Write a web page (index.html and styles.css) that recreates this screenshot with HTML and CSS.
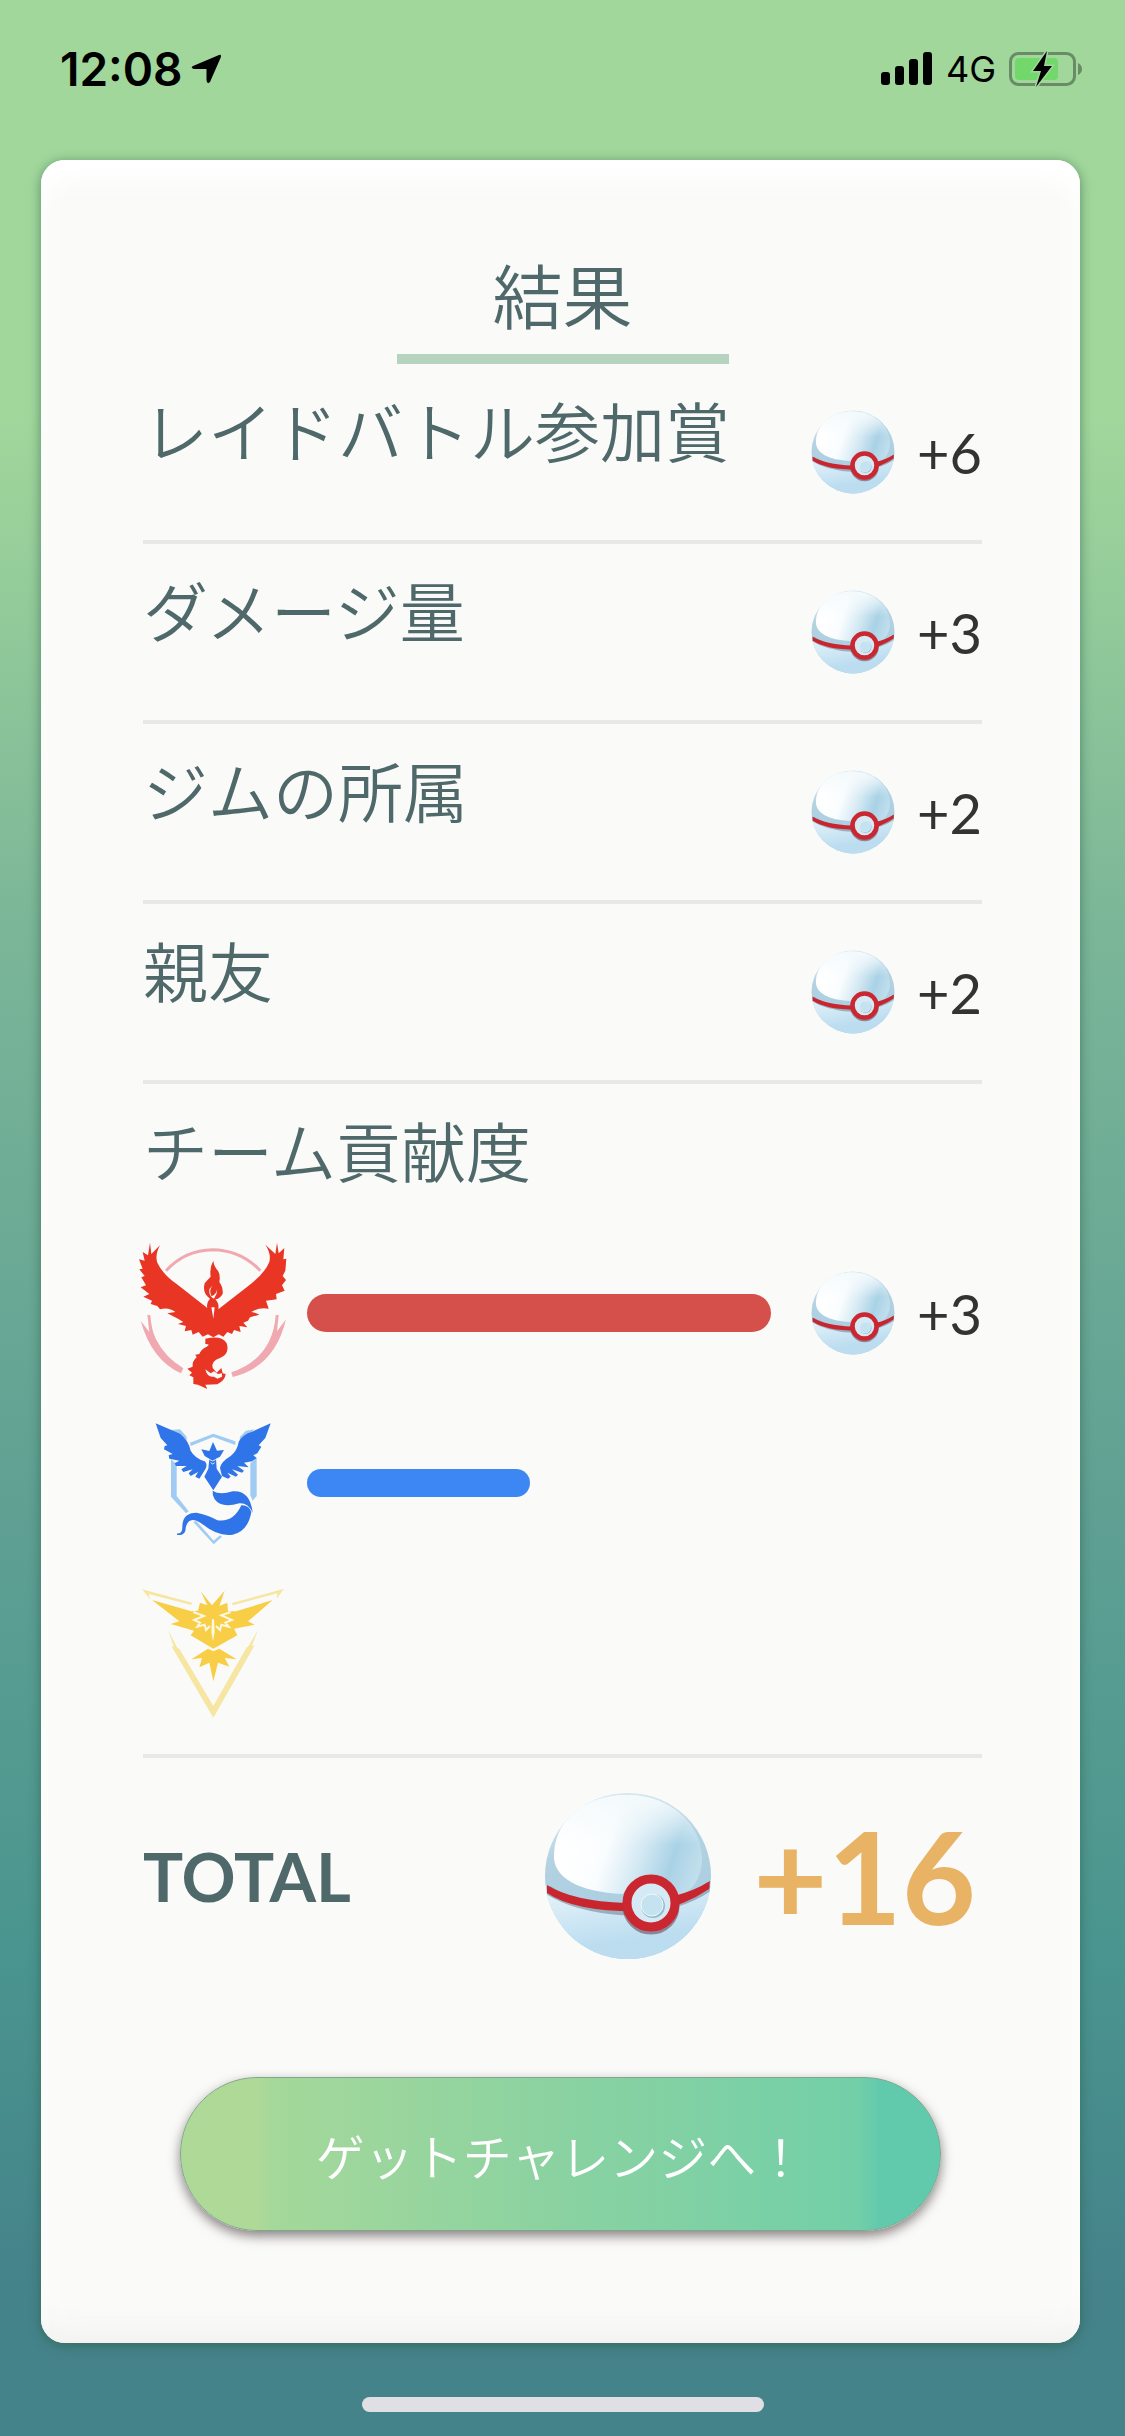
FILE: index.html
```
<!DOCTYPE html>
<html lang="ja">
<head>
    <meta charset="UTF-8">
    <meta name="viewport" content="width=device-width, initial-scale=1">
    <title>結果</title>
    <link rel="stylesheet" href="styles.css">
</head>
<body>
    <!-- Shared drawings -->
    <svg class="defs" width="0" height="0" aria-hidden="true">
        <defs>
            <linearGradient id="shell" x1="0.1" y1="0.4" x2="1" y2="0.6">
                <stop offset="0" stop-color="#ffffff"/>
                <stop offset="0.3" stop-color="#fafdfe"/>
                <stop offset="0.55" stop-color="#d6eaf4"/>
                <stop offset="0.8" stop-color="#a9d2e6"/>
                <stop offset="1" stop-color="#c0deec"/>
            </linearGradient>
            <linearGradient id="shine" x1="0" y1="0" x2="0" y2="1">
                <stop offset="0" stop-color="#f4fafc"/>
                <stop offset="0.5" stop-color="#f4fafc" stop-opacity="0"/>
            </linearGradient>
            <linearGradient id="rim" x1="0" y1="0" x2="0.2" y2="1">
                <stop offset="0" stop-color="#e3eff5"/>
                <stop offset="0.4" stop-color="#b3d2e2"/>
                <stop offset="1" stop-color="#a5cce0"/>
            </linearGradient>
            <linearGradient id="base" x1="0" y1="0" x2="0.3" y2="0.8">
                <stop offset="0" stop-color="#e8f5fb"/>
                <stop offset="1" stop-color="#bcddf0"/>
            </linearGradient>
            <clipPath id="ballClip"><circle cx="84" cy="84" r="83"/></clipPath>
        </defs>
        <symbol id="ball" viewBox="0 0 168 168">
            <circle cx="84" cy="84" r="83" fill="url(#rim)"/>
            <g clip-path="url(#ballClip)">
                <path d="M0 97Q30 118 84 118Q130 118 168 95V168H0Z" fill="url(#base)"/>
                <path d="M10 62C12 24 44 3 84 3C128 3 158 34 158 66C158 86 148 100 136 103L106 84L78 102C36 100 8 86 10 62Z" fill="url(#shell)"/>
                <path d="M10 62C12 24 44 3 84 3C128 3 158 34 158 66C158 86 148 100 136 103L106 84L78 102C36 100 8 86 10 62Z" fill="url(#shine)"/>
                <path d="M4 98Q32 116 82 119Q136 116 166 94" fill="none" stroke="#5f7486" stroke-width="9" opacity="0.5"/>
                <path d="M3 93Q28 109 82 111Q136 108 166 89L165 97Q140 114 110 119Q34 122 3 101Z" fill="#c9252f"/>
            </g>
            <circle cx="107" cy="114" r="25" fill="none" stroke="#6b4a5a" stroke-width="7" opacity="0.6"/>
            <circle cx="107" cy="111" r="24" fill="#d5eaf5" stroke="#cb2731" stroke-width="9"/>
            <circle cx="109" cy="114" r="12" fill="#94bdd1"/>
            <circle cx="108" cy="113" r="11" fill="#c5e2f1" stroke="#f0fafd" stroke-width="1"/>
        </symbol>
    </svg>

    <header class="status-bar">
        <div class="status-group">
            <span class="time">12:08</span>
            <svg class="location" viewBox="0 0 30 30" aria-hidden="true">
                <path d="M28 1Q31 0 29.500 4L19 28Q16 31 15.500 26V15H3Q-1 14 2 12Z"/>
            </svg>
        </div>
        <div class="status-group">
            <svg class="signal" viewBox="0 0 52 34" aria-hidden="true">
                <rect x="0" y="20" width="9" height="13" rx="3"/>
                <rect x="14" y="14" width="9" height="19" rx="3"/>
                <rect x="28" y="7" width="9" height="26" rx="3"/>
                <rect x="42" y="0" width="9" height="33" rx="3"/>
            </svg>
            <span class="network">4G</span>
            <svg class="battery" viewBox="0 0 74 36" aria-hidden="true">
                <rect x="1.500" y="2.500" width="64" height="31" rx="8" fill="none" stroke="#688c65" stroke-width="3"/>
                <rect x="6" y="7" width="43" height="22" rx="4" fill="#72d86b"/>
                <path d="M69 12Q73 14 73 18Q73 22 69 24Z" fill="#688c65"/>
                <path d="M38 0L24 20H32L27 36L43 15H35Z" fill="#000" stroke="#a1d79b" stroke-width="3" paint-order="stroke"/>
            </svg>
        </div>
    </header>

    <main class="card">
        <h1>結果</h1>

        <ul class="rewards">
            <li class="reward">
                <span class="label">レイドバトル参加賞</span>
                <span class="bonus"><svg class="ball" aria-hidden="true"><use href="#ball"/></svg>+6</span>
            </li>
            <li class="reward">
                <span class="label">ダメージ量</span>
                <span class="bonus"><svg class="ball" aria-hidden="true"><use href="#ball"/></svg>+3</span>
            </li>
            <li class="reward">
                <span class="label">ジムの所属</span>
                <span class="bonus"><svg class="ball" aria-hidden="true"><use href="#ball"/></svg>+2</span>
            </li>
            <li class="reward">
                <span class="label">親友</span>
                <span class="bonus"><svg class="ball" aria-hidden="true"><use href="#ball"/></svg>+2</span>
            </li>
        </ul>

        <section class="teams">
            <h2 class="label">チーム貢献度</h2>
            <div class="team valor">
                <svg class="emblem" viewBox="0 -6 510 510" aria-hidden="true">
                    <path d="M108 122Q165 60 248 59Q332 60 391 122" fill="none" stroke="#f0a9b0" stroke-width="9"/>
                    <g fill="#f0a9b0">
                        <path d="M32 272L58 306L52 254L61 256Q64 300 78 328Q105 382 160 415L153 430Q65 390 32 272Z"/>
                        <path d="M468 268L441 304L446 254L437 256Q434 300 418 332Q385 400 304 427L308 441Q435 410 468 268Z"/>
                    </g>
                    <g fill="#e83524">
                        <path d="M60 38L64 72L90 46Q74 75 82 98Q100 135 140 162L232 234Q228 218 240 206Q216 190 224 160Q232 150 242 140Q238 112 250 92Q252 110 264 122Q272 135 268 156Q280 172 278 192Q268 208 256 208Q268 220 265 238L350 172Q405 130 418 96Q424 70 406 44L436 72L441 38L446 70L463 54L460 88L469 86L466 122L458 138L468 150L456 166L464 182L438 192L440 208L408 212L416 236Q385 232 364 246Q378 248 388 254L360 262L354 272L340 278L352 292L328 288L332 306L312 300L306 312L292 306L280 320L266 313L250 322L234 313L218 320L206 306L188 314L184 300L164 304L168 288L144 282L160 276L144 266L112 250L136 246Q116 230 90 238L82 228L62 222L66 212L40 200L58 192L32 172L48 166L34 142L44 138L28 118L38 116L27 88L44 92L38 66L54 76Z"/>
                        <path d="M226 326Q276 314 290 340Q300 372 270 384Q242 394 248 414L260 428L274 414L278 430L287 432Q286 450 262 463L226 464L232 477L204 464L190 462L190 442L178 436L186 428L172 416L188 410Q186 394 200 382L196 374L208 372Q212 358 230 350Q244 342 226 342Z"/>
                    </g>
                    <path d="M248 166Q236 182 244 198Q256 198 262 178Q262 192 252 206Q236 200 238 178ZM244 232L250 266L254 232Z" fill="#fafaf8"/>
                    <path d="M226 418Q232 444 252 440L262 446L276 440L276 430L264 432L252 424L242 430Z" fill="#fafaf8"/>
                </svg>
                <div class="track"><div class="bar" style="width: 100%"></div></div>
                <span class="bonus"><svg class="ball" aria-hidden="true"><use href="#ball"/></svg>+3</span>
            </div>
            <div class="team mystic">
                <svg class="emblem" viewBox="-30 -24 510 510" aria-hidden="true">
                    <g fill="#a0cbf2">
                        <path d="M150 110L220 83L286 106V117L220 93L152 120Z"/>
                        <path d="M93 160L110 175V270L146 316L138 322L93 272Z"/>
                        <path d="M350 155L331 172V268L338 284L350 270Z"/>
                        <path d="M168 344L221 404L240 388L246 392L221 415L160 348Z"/>
                        <path d="M92 72L120 70L140 92L140 108ZM344 70L318 74L300 92L298 112Z"/>
                    </g>
                    <g fill="#2f74e8">
                        <path d="M47 52L120 83Q146 104 152 134Q164 156 194 166Q204 174 196 190L178 218L166 212L174 198L152 210L146 202L158 190L130 198L124 190L140 180L108 180L104 172L118 164L88 158L86 148L98 144L72 130L74 120L82 118L62 96Z"/>
                        <path d="M392 52L376 96L356 118L364 122L352 142L340 148L350 156L336 166L312 170L326 184L292 180L312 194L306 200L276 190L294 206L288 212L262 200L272 212L264 218L246 210L240 186Q242 168 272 150Q292 134 296 108Q308 86 334 78Z"/>
                        <path d="M219 108L231 134L252 132L240 152L228 158L230 188L246 212L220 253L193 212L205 188L208 158L194 150L184 130L208 135Z"/>
                        <path d="M218 254Q238 268 278 256Q330 252 338 320Q324 290 298 292Q244 308 224 280Q216 266 218 254Z"/>
                        <path d="M304 298Q326 296 334 318Q324 376 278 386Q234 392 192 358Q146 322 137 366Q138 390 111 387L112 382Q128 384 127 360Q128 320 170 320Q208 328 232 343Q280 350 304 298Z"/>
                    </g>
                    <path d="M207 160L218 165L229 160M212 170L218 174L224 170" fill="none" stroke="#dceafb" stroke-width="3"/>
                </svg>
                <div class="track"><div class="bar" style="width: 48%"></div></div>
            </div>
            <div class="team instinct">
                <svg class="emblem" viewBox="0 -6 510 510" aria-hidden="true">
                    <g fill="#f6e6a2">
                        <path d="M36 58L186 98L184 105L56 72L60 88ZM462 56L306 99L308 106L442 70L440 86Z"/>
                        <path d="M114 180L142 234L134 238ZM384 180L352 234L362 238Z"/>
                        <path d="M124 228L148 236L250 408L350 232L374 226L250 443Z"/>
                    </g>
                    <g fill="#f7ce45">
                        <path d="M66 90L184 124L204 122L210 98L232 106L212 64L246 106L284 62L268 108L292 98L294 124L318 124L428 90L354 154L374 164L312 176L322 196L250 236L182 196L192 182L122 162L148 154Z"/>
                        <path d="M184 268L234 236L250 244L268 236L320 268L284 264L298 290L264 278L250 334L238 278L208 292L216 264Z"/>
                    </g>
                    <path d="M190 126L222 138L192 150L210 158L202 170L224 164L228 180L240 168M302 126L274 136L306 150L286 158L296 170L274 164L270 180L258 168" fill="none" stroke="#fdf8e2" stroke-width="6"/>
                    <path d="M246 148H252L254 186L249 214L244 186Z" fill="#fdf8e2"/>
                </svg>
                <div class="track"></div>
            </div>
        </section>

        <section class="total">
            <h2>TOTAL</h2>
            <svg class="ball" aria-hidden="true"><use href="#ball"/></svg>
            <strong>+16</strong>
        </section>

        <button class="challenge" type="button">ゲットチャレンジへ！</button>
    </main>

    <div class="home-indicator"></div>
</body>
</html>
```

FILE: styles.css
```
* {
    box-sizing: border-box;
}
body {
    margin: 0;
    min-height: 100vh;
    display: flex;
    flex-direction: column;
    background: linear-gradient(#a1d79b 0%, #a1d79b 17%, #7bb698 38%, #5fa093 62%, #4a958f 80%, #45838a 94%, #45838a 100%);
    color: #4f696b;
    font-family: Lato, "Noto Sans CJK JP", sans-serif;
}
h1, h2, ul {
    margin: 0;
    padding: 0;
    font-weight: normal;
}
.defs {
    position: absolute;
}
.status-bar {
    height: 160px;
    padding: 44px 42px 0 60px;
    display: flex;
    justify-content: space-between;
    align-items: flex-start;
    color: #000;
    font-family: Inter, sans-serif;
}
.status-group {
    display: flex;
    align-items: center;
    height: 50px;
}
.time {
    font-size: 46px;
    font-weight: 600;
}
.location {
    width: 30px;
    height: 30px;
    margin-left: 8px;
}
.signal {
    width: 52px;
    height: 34px;
}
.network {
    margin: 0 13px;
    font-size: 36px;
}
.battery {
    width: 74px;
    height: 36px;
}
.card {
    margin: 0 45px 0 41px;
    padding: 88px 98px 112px 102px;
    border-radius: 24px;
    background: #fafaf8;
    box-shadow: 0 2px 12px rgba(40, 90, 70, 0.6), inset 0 30px 30px -10px #fff, inset 0 -30px 30px -20px #f0f0ee, inset 0 0 40px #fff;
    display: flex;
    flex-direction: column;
}
h1 {
    align-self: center;
    width: 332px;
    height: 116px;
    border-bottom: 10px solid #b6d3c0;
    font-size: 70px;
    font-weight: 350;
    line-height: 98px;
    text-align: center;
}
.rewards {
    list-style: none;
}
.reward {
    height: 180px;
    display: flex;
    justify-content: space-between;
    align-items: flex-start;
    border-bottom: 4px solid #e8e8e7;
}
.label {
    font-size: 65px;
    font-weight: 350;
    line-height: 96px;
}
.reward .label {
    padding-top: 20px;
}
.bonus {
    display: flex;
    align-items: center;
    justify-content: space-between;
    width: 171px;
    height: 84px;
    color: #333;
    font-size: 56px;
}
.reward .bonus {
    margin-top: 46px;
}
.ball {
    width: 84px;
    height: 84px;
}
.teams {
    padding: 20px 0 16px;
    border-bottom: 4px solid #e8e8e7;
}
.teams .label {
    margin-bottom: 28px;
}
.team {
    height: 170px;
    display: flex;
    align-items: center;
}
.emblem {
    width: 170px;
    height: 170px;
    margin: 0 7px 0 -13px;
}
.track {
    width: 464px;
    margin-right: auto;
}
.bar {
    height: 38px;
    border-radius: 19px;
    background: #d5504b;
}
.mystic .bar {
    height: 28px;
    border-radius: 14px;
    background: #3d87f5;
}
.total {
    padding: 34px 6px 0 0;
    display: flex;
    align-items: center;
}
.total h2 {
    font-size: 67px;
    font-weight: bold;
}
.total .ball {
    width: 168px;
    height: 168px;
    margin: 0 41px 0 auto;
}
.total strong {
    color: #e8b365;
    font-size: 128px;
    line-height: 168px;
}
.challenge {
    height: 154px;
    margin: 117px 41px 0 37px;
    border: 1px solid #7fa78f;
    border-radius: 77px;
    background: linear-gradient(90deg, #afd997 0%, #afd997 10%, #a5d89a 12%, #8ad2a1 50%, #73cfa8 89%, #62caac 92%, #62caac 100%);
    box-shadow: 0 5px 12px rgba(60, 50, 50, 0.6);
    color: #fff;
    font-family: "Noto Sans CJK JP", sans-serif;
    font-size: 49px;
    font-weight: 350;
}
.home-indicator {
    width: 402px;
    height: 15px;
    margin: auto auto 24px;
    border-radius: 8px;
    background: #e0dfe4;
}
```
